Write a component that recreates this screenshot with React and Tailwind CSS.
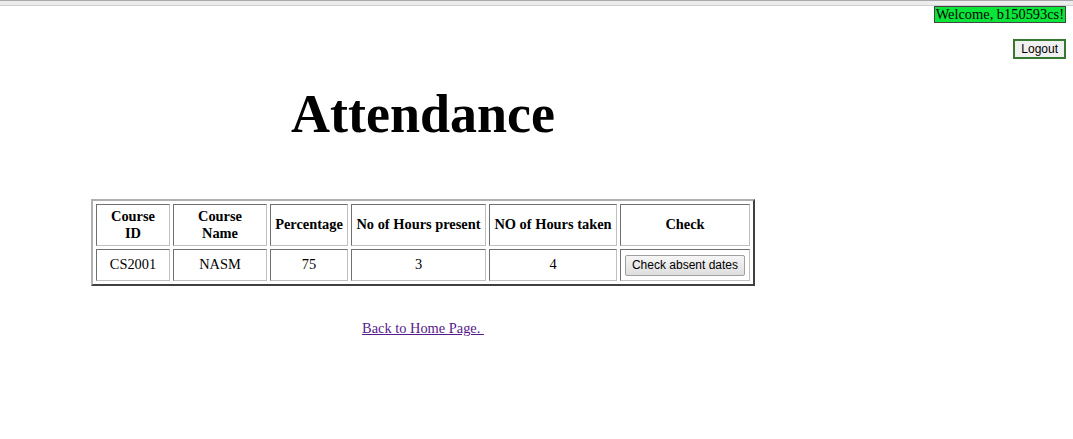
import React from "react";

const rows = [
  { id: "CS2001", name: "NASM", pct: 75, present: 3, taken: 4 },
];

const cell = "border border-[#707070] border-r-[#c0c0c0] border-b-[#c0c0c0]";

const App = () => {
  return (
    <div className="relative min-h-[439px] bg-white font-['Liberation_Serif',serif] text-[14.4px] text-black">
      {/* top strip */}
      <div className="h-[6px] border-t border-[#a8a8a8] border-b border-b-[#cfcfcf] bg-[#ececec]"></div>

      <div className="flex flex-col items-end pr-[7px]">
        <span className="border border-[#444] bg-[#0be53a] px-[1px] leading-[15px]">
          Welcome, b150593cs!
        </span>
        <button className="mt-[16px] h-[20px] border-2 border-[#36782f] bg-[#f0f0f0] px-[6px] font-['Liberation_Sans',sans-serif] text-[12px] leading-none">
          Logout
        </button>
      </div>

      <div className="flex w-[846px] flex-col items-center">
        <h1 className="mt-[23px] text-[54px] font-bold leading-[64px]">Attendance</h1>

        <table className="mt-[53px] border-separate border-spacing-[3px] border-2 border-t-[#b0b0b0] border-l-[#b0b0b0] border-r-[#404040] border-b-[#404040] border-[#808080]">
          <thead>
            <tr>
              <th className={`${cell} h-[42px] w-[74px] p-[1px] font-bold leading-[17px]`}>
                Course
                <br />
                ID
              </th>
              <th className={`${cell} w-[94px] p-[1px] font-bold leading-[17px]`}>
                Course
                <br />
                Name
              </th>
              <th className={`${cell} w-[78px] p-[1px] font-bold`}>Percentage</th>
              <th className={`${cell} w-[135px] p-[1px] font-bold`}>No of Hours present</th>
              <th className={`${cell} w-[128px] p-[1px] font-bold`}>NO of Hours taken</th>
              <th className={`${cell} w-[130px] p-[1px] font-bold`}>Check</th>
            </tr>
          </thead>
          <tbody>
            {rows.map((r) => (
              <tr key={r.id}>
                <td className={`${cell} h-[32px] p-[1px] text-center`}>{r.id}</td>
                <td className={`${cell} p-[1px] text-center`}>{r.name}</td>
                <td className={`${cell} p-[1px] text-center`}>{r.pct}</td>
                <td className={`${cell} p-[1px] text-center`}>{r.present}</td>
                <td className={`${cell} p-[1px] text-center`}>{r.taken}</td>
                <td className={`${cell} p-[1px] text-center`}>
                  <button className="h-[21px] rounded-[2px] border border-[#a0a0a0] bg-gradient-to-b from-[#f6f6f6] to-[#dedede] px-[6px] font-['Liberation_Sans',sans-serif] text-[12px] leading-none">
                    Check absent dates
                  </button>
                </td>
              </tr>
            ))}
          </tbody>
        </table>

        <a href="#" className="mt-[32px] text-[#551a8b] underline">
          Back to Home Page.&nbsp;
        </a>
      </div>
    </div>
  );
};

export default App;
